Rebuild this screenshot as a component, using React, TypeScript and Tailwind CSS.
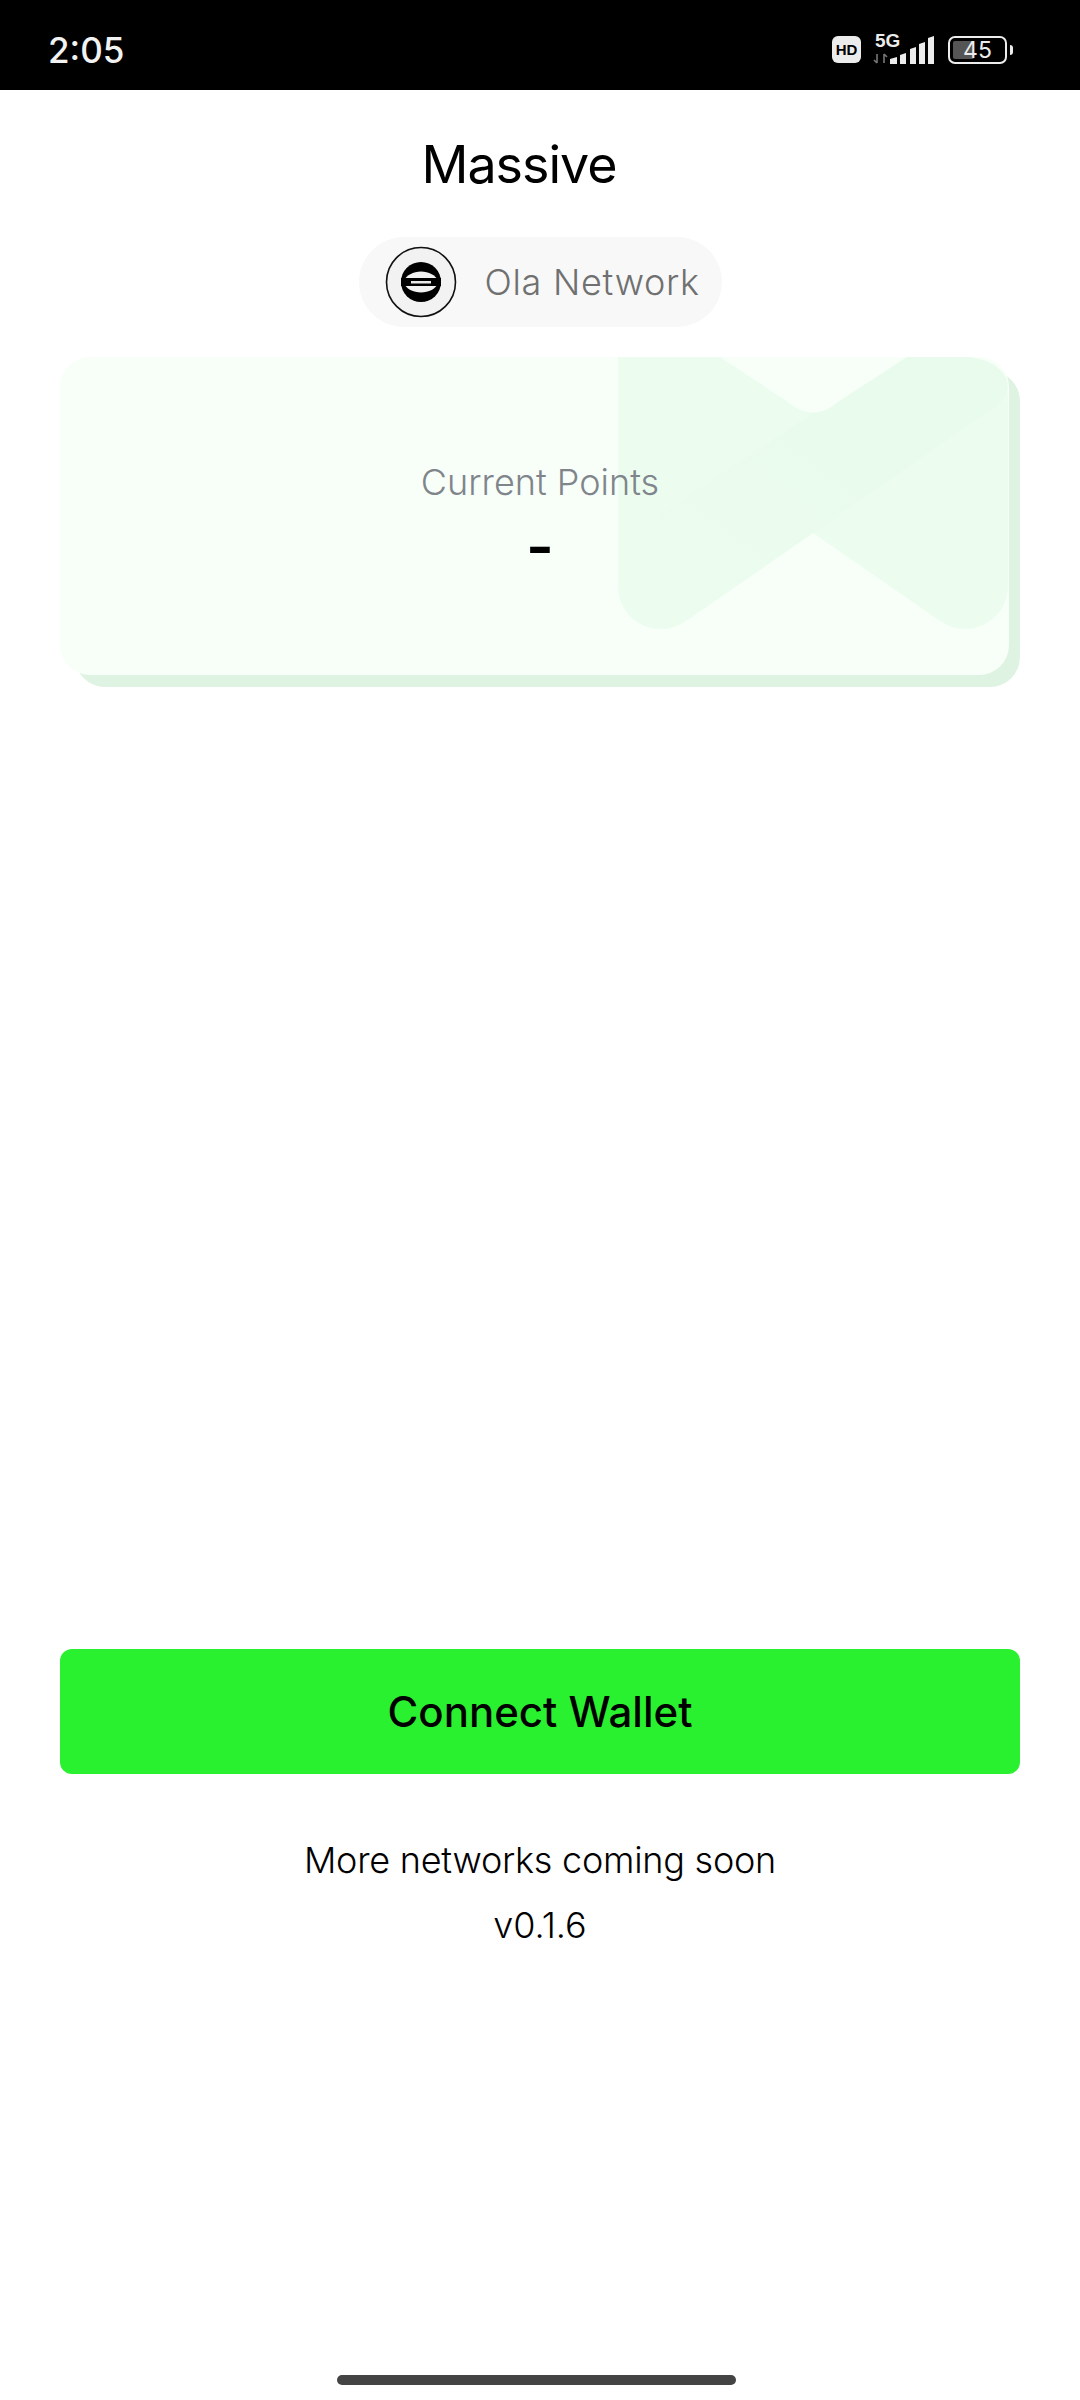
const font = "font-['Inter','Noto_Sans',sans-serif]";

function StatusIcons() {
  return (
    <svg width="102" height="40" viewBox="0 0 102 40" fill="none">
      <rect x="0" y="6" width="29" height="27" rx="6" fill="#ececec" />
      <text x="14.5" y="25" textAnchor="middle" fontSize="15" fontWeight="800" fill="#000" fontFamily="Liberation Sans">HD</text>
      <text x="43" y="17" fontSize="19" fontWeight="700" fill="#ececec" fontFamily="Liberation Sans">5G</text>
      <path d="M45 24v9m-3-3l3 3M52 33v-9m3 3l-3-3" stroke="#777" strokeWidth="1.6" />
      <path d="M58 29l7-2v7h-7z M68 25l6-2v11h-6z M78 19l6-2v17h-6z M87 14l6-2v22h-6z M96 8l6-2v28h-6z" fill="#ececec" />
    </svg>
  );
}

function Battery() {
  return (
    <div className="flex items-center gap-[3px]">
      <div className="relative w-[59px] h-[28px] rounded-[7px] border-[2.5px] border-[#ececec] p-[3px]">
        <div className="w-[21px] h-full rounded-[2px] bg-[#555]" />
        <span className="absolute inset-0 flex items-center justify-center text-[23px] leading-none text-[#ececec]">45</span>
      </div>
      <div className="w-[3px] h-[10px] rounded-r-sm bg-[#ececec]" />
    </div>
  );
}

function OlaLogo() {
  return (
    <svg width="72" height="72" viewBox="0 0 72 72">
      <circle cx="36" cy="36" r="34.5" fill="#f2f2f2" stroke="#111" strokeWidth="1.6" />
      <circle cx="36" cy="36" r="20" fill="#000" />
      <path d="M18 36C24 22 48 22 54 36C48 50 24 50 18 36Z" fill="#f2f2f2" />
      <rect x="16" y="32" width="40" height="8" fill="#000" />
      <rect x="26" y="35" width="20" height="2.5" fill="#e8e8e8" />
    </svg>
  );
}

export default function App() {
  return (
    <div className={`w-[1080px] h-[2400px] bg-white flex flex-col ${font}`}>
      <div className="h-[90px] bg-black flex items-center justify-between pt-[10px] pl-[48px] pr-[67px]">
        <span className="text-[35px] font-medium text-[#f2f2f2]">2:05</span>
        <div className="flex items-center gap-[14px]">
          <StatusIcons />
          <Battery />
        </div>
      </div>

      <h1 className="mt-[47px] pr-[42px] text-center text-[52px] leading-[56px] font-normal tracking-[-1px] text-black">Massive</h1>

      <div className="mt-[44px] self-center w-[363px] h-[90px] rounded-full bg-[#f8f8f8] flex items-center pl-[26px]">
        <OlaLogo />
        <span className="ml-[28px] text-[36px] font-light tracking-[0.7px] text-[#707070]">Ola Network</span>
      </div>

      <div className="mt-[30px] mx-[60px] relative h-[330px]">
        <div className="absolute left-[15px] right-0 top-[14px] bottom-0 rounded-[30px] bg-[#dff3e2]" />
        <div className="absolute left-0 right-[11px] top-0 bottom-[12px] rounded-[30px] bg-[#f7fff8] overflow-hidden">
          <svg className="absolute left-[558px] top-0" width="390" height="272" viewBox="0 0 390 272" fill="none">
            <defs>
              <linearGradient id="band" x1="0" y1="1" x2="1" y2="0">
                <stop offset="0.15" stopColor="#ecfdef" />
                <stop offset="0.6" stopColor="#e9fbec" />
              </linearGradient>
            </defs>
            <path d="M0 0H102L170 45C187 59 203 59 220 45L289 0H345C375 0 390 20 390 40V229C390 253 371 272 347 272Q334 272 322 264L195 176L68 264Q56 272 43 272C19 272 0 253 0 229V0Z" fill="#ecfdef" />
            <path d="M195 56C205 56 212 52 220 45L289 0H345C372 0 390 14 390 30C388 48 370 55 345 72L195 176L68 264Q56 272 43 272C19 272 0 253 0 229V185Z" fill="url(#band)" />
          </svg>
          <div className="relative flex flex-col items-center pt-[103px] pl-[11px]">
            <span className="text-[36px] leading-[44px] font-light text-[#80858c]">Current Points</span>
            <span className="mt-[7px] text-[60px] leading-[70px] font-semibold text-black">-</span>
          </div>
        </div>
      </div>

      <div className="flex-1" />

      <button className="mx-[60px] h-[125px] rounded-[12px] bg-[#29f130] text-[42px] font-medium text-black">Connect Wallet</button>

      <p className="mt-[61px] text-center text-[36px] leading-[50px] font-light tracking-[-0.25px] text-black">More networks coming soon</p>
      <p className="mt-[15px] text-center text-[36px] leading-[50px] font-light text-black">v0.1.6</p>

      <div className="mt-[425px] mb-[15px] self-center mr-[7px] w-[399px] h-[10px] rounded-full bg-[#444]" />
    </div>
  );
}
